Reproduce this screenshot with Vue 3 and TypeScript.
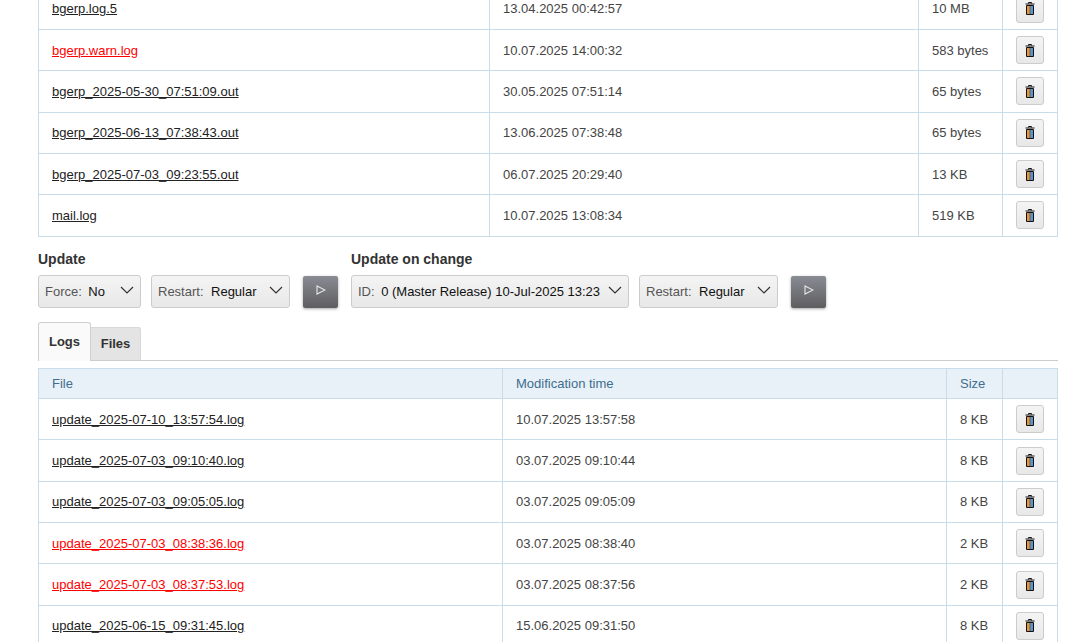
<script setup lang="ts">
interface Row { name: string; time: string; size: string; warn?: boolean }
const topRows: Row[] = [
  { name: 'bgerp.log.5', time: '13.04.2025 00:42:57', size: '10 MB' },
  { name: 'bgerp.warn.log', time: '10.07.2025 14:00:32', size: '583 bytes', warn: true },
  { name: 'bgerp_2025-05-30_07:51:09.out', time: '30.05.2025 07:51:14', size: '65 bytes' },
  { name: 'bgerp_2025-06-13_07:38:43.out', time: '13.06.2025 07:38:48', size: '65 bytes' },
  { name: 'bgerp_2025-07-03_09:23:55.out', time: '06.07.2025 20:29:40', size: '13 KB' },
  { name: 'mail.log', time: '10.07.2025 13:08:34', size: '519 KB' },
]
const logRows: Row[] = [
  { name: 'update_2025-07-10_13:57:54.log', time: '10.07.2025 13:57:58', size: '8 KB' },
  { name: 'update_2025-07-03_09:10:40.log', time: '03.07.2025 09:10:44', size: '8 KB' },
  { name: 'update_2025-07-03_09:05:05.log', time: '03.07.2025 09:05:09', size: '8 KB' },
  { name: 'update_2025-07-03_08:38:36.log', time: '03.07.2025 08:38:40', size: '2 KB', warn: true },
  { name: 'update_2025-07-03_08:37:53.log', time: '03.07.2025 08:37:56', size: '2 KB', warn: true },
  { name: 'update_2025-06-15_09:31:45.log', time: '15.06.2025 09:31:50', size: '8 KB' },
]
</script>

<template>
  <div class="page">
    <table class="grid first">
      <colgroup><col class="c1a" /><col class="c2a" /><col class="c3a" /><col class="c4" /></colgroup>
      <tbody>
        <tr v-for="r in topRows" :key="r.name">
          <td><a href="#" :class="{ warn: r.warn }">{{ r.name }}</a></td>
          <td>{{ r.time }}</td>
          <td>{{ r.size }}</td>
          <td class="act">
            <button class="del" type="button" aria-label="Delete">
              <svg width="10" height="13" viewBox="0 0 10 13">
                <path d="M3.5 1.5V.5h3v1M.5 2h9" fill="none" stroke="#111" stroke-width="1" />
                <path d="M2 4h2.6v8H2z" fill="#e8962f" />
                <path d="M5.4 4H8v8H5.4z" fill="#5a93d0" />
                <path d="M1.5 3.5h7v9h-7z" fill="none" stroke="#111" stroke-width="1" />
                <path d="M5 4v8" stroke="#222" stroke-width=".8" />
              </svg>
            </button>
          </td>
        </tr>
      </tbody>
    </table>

    <div class="forms">
      <section class="group">
        <h3>Update</h3>
        <div class="controls">
          <div class="select w-force"><span class="lbl">Force:</span><span class="val">No</span><svg class="chev" width="14" height="8" viewBox="0 0 14 8"><path d="M1 1l6 6 6-6" fill="none" stroke="#333" stroke-width="1.2" /></svg></div>
          <div class="select w-restart"><span class="lbl">Restart:</span><span class="val">Regular</span><svg class="chev" width="14" height="8" viewBox="0 0 14 8"><path d="M1 1l6 6 6-6" fill="none" stroke="#333" stroke-width="1.2" /></svg></div>
          <button class="run" type="button" aria-label="Run"><svg width="10" height="10" viewBox="0 0 10 10"><path d="M1 1l8 4-8 4z" fill="none" stroke="#e8e8e8" stroke-width="1.1" /></svg></button>
        </div>
      </section>
      <section class="group">
        <h3>Update on change</h3>
        <div class="controls">
          <div class="select w-id"><span class="lbl">ID:</span><span class="val">0 (Master Release) 10-Jul-2025 13:23</span><svg class="chev" width="14" height="8" viewBox="0 0 14 8"><path d="M1 1l6 6 6-6" fill="none" stroke="#333" stroke-width="1.2" /></svg></div>
          <div class="select w-restart"><span class="lbl">Restart:</span><span class="val">Regular</span><svg class="chev" width="14" height="8" viewBox="0 0 14 8"><path d="M1 1l6 6 6-6" fill="none" stroke="#333" stroke-width="1.2" /></svg></div>
          <button class="run" type="button" aria-label="Run"><svg width="10" height="10" viewBox="0 0 10 10"><path d="M1 1l8 4-8 4z" fill="none" stroke="#e8e8e8" stroke-width="1.1" /></svg></button>
        </div>
      </section>
    </div>

    <div class="tabs">
      <div class="tab active">Logs</div>
      <div class="tab">Files</div>
    </div>

    <table class="grid second">
      <colgroup><col class="c1b" /><col class="c2b" /><col class="c3b" /><col class="c4" /></colgroup>
      <thead>
        <tr><th>File</th><th>Modification time</th><th>Size</th><th></th></tr>
      </thead>
      <tbody>
        <tr v-for="r in logRows" :key="r.name">
          <td><a href="#" :class="{ warn: r.warn }">{{ r.name }}</a></td>
          <td>{{ r.time }}</td>
          <td>{{ r.size }}</td>
          <td class="act">
            <button class="del" type="button" aria-label="Delete">
              <svg width="10" height="13" viewBox="0 0 10 13">
                <path d="M3.5 1.5V.5h3v1M.5 2h9" fill="none" stroke="#111" stroke-width="1" />
                <path d="M2 4h2.6v8H2z" fill="#e8962f" />
                <path d="M5.4 4H8v8H5.4z" fill="#5a93d0" />
                <path d="M1.5 3.5h7v9h-7z" fill="none" stroke="#111" stroke-width="1" />
                <path d="M5 4v8" stroke="#222" stroke-width=".8" />
              </svg>
            </button>
          </td>
        </tr>
      </tbody>
    </table>
  </div>
</template>

<style>
html, body { background: #fff; overflow: hidden; }
</style>

<style scoped>
.page {
  height: 642px;
  overflow: hidden;
  box-sizing: border-box;
  padding: 0 33px 0 38px;
  font-family: "Liberation Sans", Arial, sans-serif;
  font-size: 13px;
  color: #444;
}
.grid {
  width: 1020px;
  table-layout: fixed;
  border-collapse: collapse;
  border: 1px solid #c9dcea;
}
.first { margin-top: -12.33px; }
.c1a { width: 451px; }
.c2a { width: 429px; }
.c3a { width: 84px; }
.c1b { width: 464px; }
.c2b { width: 444px; }
.c3b { width: 56px; }
.c4 { width: 55px; }
td {
  height: 41.33px;
  box-sizing: border-box;
  padding: 0 13px;
  border: 1px solid #c9dcea;
  vertical-align: middle;
  white-space: nowrap;
}
th {
  height: 30px;
  box-sizing: border-box;
  padding: 0 13px;
  border: 1px solid #c9dcea;
  background: #e9f1f8;
  color: #3e6d8e;
  font-weight: normal;
  text-align: left;
}
a { color: #222; text-decoration: underline; }
a.warn { color: #f00; }
.act { padding: 0; text-align: center; }
.del {
  width: 28px;
  height: 28px;
  padding: 0;
  display: inline-flex;
  align-items: center;
  justify-content: center;
  vertical-align: middle;
  border: 1px solid #ccc;
  border-radius: 3px;
  background: linear-gradient(#f4f4f4, #e8e8e8);
}
.forms {
  display: flex;
  gap: 13px;
  margin-top: 14.33px;
}
h3 {
  margin: 0 0 8px;
  font-size: 14px;
  line-height: 16px;
  font-weight: bold;
  color: #333;
}
.controls {
  display: flex;
  align-items: flex-start;
  gap: 10px;
}
.select {
  height: 33px;
  box-sizing: border-box;
  display: flex;
  align-items: center;
  padding: 0 6px;
  border: 1px solid #ccc;
  border-radius: 3px;
  background: linear-gradient(#f4f4f4, #e8e8e8);
  color: #111;
  white-space: nowrap;
}
.lbl { color: #555; margin-right: 6.5px; }
.w-restart .lbl { margin-right: 7.5px; }
.chev { margin-left: auto; margin-top: -2px; }
.w-force { width: 103px; }
.w-restart { width: 139px; }
.w-id { width: 278px; }
.run {
  width: 35px;
  height: 32px;
  margin: 1px 0 0 3px;
  padding: 0;
  display: flex;
  align-items: center;
  justify-content: center;
  border: 0;
  border-radius: 2px;
  background: linear-gradient(#8a8c94, #5e5e60);
  box-shadow: 0 1px 3px rgba(0, 0, 0, .35);
}
.run svg { margin-top: -3px; }
.tabs {
  display: flex;
  align-items: flex-end;
  margin-top: 14px;
  border-bottom: 1px solid #ccc;
  height: 38px;
}
.tab {
  box-sizing: border-box;
  height: 33px;
  width: 50px;
  display: flex;
  align-items: center;
  justify-content: center;
  background: #e4e4e4;
  border: 1px solid #d8d8d8;
  border-left: 0;
  border-bottom: 0;
  border-radius: 0 3px 0 0;
  color: #333;
  font-weight: bold;
}
.tab.active {
  width: 53px;
  height: 39px;
  margin-bottom: -1px;
  background: #fafafa;
  border: 1px solid #d0d0d0;
  border-bottom: 0;
  border-radius: 3px 3px 0 0;
}
.second { margin-top: 7.2px; }
</style>
